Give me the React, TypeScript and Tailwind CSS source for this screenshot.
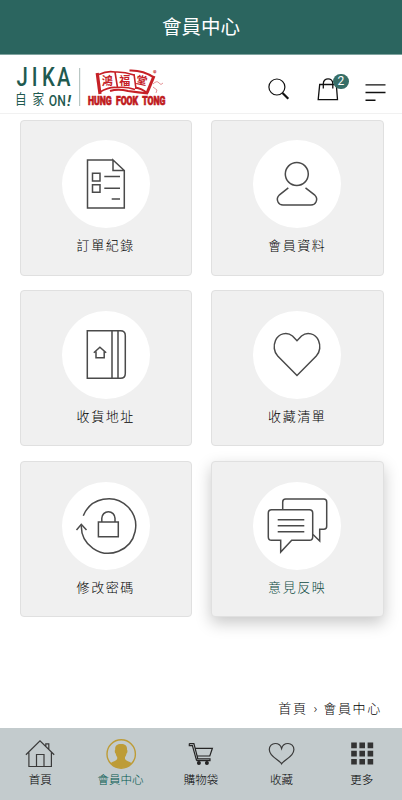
import React from 'react';

interface MenuItem {
  label: string;
  icon: React.ReactNode;
  active?: boolean;
}

const menuItems: MenuItem[] = [
  {
    label: '訂單紀錄',
    icon: (
      <>
        <path d="M51 20H25.5V68H62.3V30.5L51 20V30.5H62.3" />
        <path d="M30.5 33.3H38V41H30.5ZM30.5 44.8H38V52.3H30.5ZM42.3 36.5H58M42.3 48.3H58M49.7 59H58" />
      </>
    ),
  },
  {
    label: '會員資料',
    icon: (
      <>
        <circle cx="43.8" cy="34" r="11.5" />
        <path d="M35.3 47.8L26.5 54.8C24.2 57 24 60 25 62C26 64.2 27.7 65 30 65H58C60.3 65 62 64.2 63 62C64 60 63.8 57 61.5 54.8L52.5 47.8" />
      </>
    ),
  },
  {
    label: '收貨地址',
    icon: (
      <>
        <path d="M25.3 19.7H58.5Q63.3 19.7 63.3 24.5V62.5Q63.3 67.3 58.5 67.3H25.3ZM50 19.7V67.3M56 19.7V67.3" />
        <path d="M31.8 41.8L37.9 36.2L44.2 41.8M34 40.5V46.8H42.2V40.5" />
      </>
    ),
  },
  {
    label: '收藏清單',
    icon: (
      <path d="M44 64.5L24.7 45C20.8 41 20.3 34.5 22.5 29.5C25.5 22.3 34 20.5 39.5 25L44 29.7L48.5 25C54 20.5 62.5 22.3 65.5 29.5C67.7 34.5 67.2 41 63.3 45Z" />
    ),
  },
  {
    label: '修改密碼',
    icon: (
      <>
        <path d="M21.3 33.7A27.2 27.2 0 1 1 19.3 43.3" />
        <path d="M14.5 48L19.3 42.3L24.5 48M36.4 40H56.3V54.7H36.4ZM39.8 40V36.3A6.6 6.6 0 0 1 53 36.3V40" />
      </>
    ),
  },
  {
    label: '意見反映',
    active: true,
    icon: (
      <>
        <path d="M29.7 27.7V20Q29.7 17 32.7 17H70.7Q73.7 17 73.7 20V44.3Q73.7 47.3 70.7 47.3H66.7V59L60 52.5" />
        <path d="M18.6 27.7H56.4Q59.7 27.7 59.7 31V55Q59.7 58.3 56.4 58.3H38.7L27.7 70V58.3H18.6Q15.3 58.3 15.3 55V31Q15.3 27.7 18.6 27.7Z" />
        <path d="M24.7 37.7H51.3M24.7 43.7H51.3M24.7 49.7H51.3" />
      </>
    ),
  },
];

const tabs: MenuItem[] = [
  {
    label: '首頁',
    icon: (
      <g stroke="#3a3a3a" strokeWidth="1.2">
        <path d="M0.9 14.8L15 0.8L29.2 14.8M3.9 12.5V26.5H26.4V12.5M11.5 26.5V14.5H19V26.5M20.8 6V3.8H23.8V9" />
      </g>
    ),
  },
  {
    label: '會員中心',
    active: true,
    icon: (
      <>
        <circle cx="15.2" cy="14" r="14.2" stroke="#bd9c37" strokeWidth="1.4" />
        <path
          fill="#bd9c37"
          d="M15 4C19.5 4 21.3 5.8 21 9.8C21.8 10.5 21.4 13 20.5 13.4C20.2 15.3 19.6 16.3 19 17V19C20 21 23.5 21.3 25.7 23.2C20.5 29.7 9.7 29.7 4.5 23.2C6.7 21.3 10.2 21 11.2 19V17C10.6 16.3 10 15.3 9.7 13.4C8.8 13 8.4 10.5 9.2 9.8C8.9 5.8 10.7 4 15 4Z"
        />
      </>
    ),
  },
  {
    label: '購物袋',
    icon: (
      <g stroke="#252525" strokeWidth="1.4">
        <path d="M3.3 3.6H7.9L12 19.3M3.3 3.6V5.6H6.4L10.6 20.7M8.6 8.3H26.4L23.8 16H10.6M10.8 18.8H24V20.7H10.6" strokeWidth="1.2" />
        <circle cx="12.9" cy="22.9" r="1.3" fill="#252525" />
        <circle cx="20.9" cy="22.9" r="1.3" fill="#252525" />
      </g>
    ),
  },
  {
    label: '收藏',
    icon: (
      <path
        stroke="#3a3a3a"
        strokeWidth="1.2"
        d="M15.6 23.8C14.5 21.6 8.5 18.6 5.3 14.6C3.8 12.7 3.3 11.2 3.3 9.6C3.3 6 6 3.5 9.2 3.5C12.5 3.5 14.8 5.5 15.6 8.5C16.4 5.5 18.7 3.5 22 3.5C25.2 3.5 27.9 6 27.9 9.6C27.9 11.2 27.4 12.7 25.9 14.6C22.7 18.6 16.7 21.6 15.6 23.8Z"
      />
    ),
  },
  {
    label: '更多',
    icon: (
      <path
        fill="#333"
        d="M4.2 2.6h5.6v5.6H4.2zM12.4 2.6H18v5.6h-5.6zM20.6 2.6h5.6v5.6h-5.6zM4.2 10.8h5.6v5.6H4.2zM12.4 10.8H18v5.6h-5.6zM20.6 10.8h5.6v5.6h-5.6zM4.2 19h5.6v5.6H4.2zM12.4 19H18v5.6h-5.6zM20.6 19h5.6v5.6h-5.6z"
      />
    ),
  },
];

const Logo: React.FC = () => (
  <svg width="155" height="52" viewBox="0 0 155 52" fill="none" className="shrink-0 overflow-visible">
    <g fill="#1f5a50" className="font-['Roboto','Noto_Sans_CJK_TC',sans-serif]">
      <text x="2 21.5 34.5 54" y="28.5" fontSize="26" fontWeight="500" transform="scale(0.78 1)">JIKA</text>
      <text x="0 20.4" y="46.5" fontSize="13.5" fontWeight="400" transform="scale(0.86 1)" className="font-['Noto_Sans_CJK_TC',sans-serif]">自家</text>
      <text x="33.8" y="48" fontSize="14.5" fontWeight="500" textLength="17" lengthAdjust="spacingAndGlyphs">ON</text>
      <text x="52" y="48" fontSize="15" fontWeight="700" fontStyle="italic">!</text>
    </g>
    <path d="M64.7 10V48" stroke="#a9bab7" />
    {/* Scroll shaped banner */}
    <g stroke="#c62026" fill="none">
      <path d="M82.2 15L85 36" strokeWidth="3.2" />
      <path d="M84 16.5Q92 12.5 100 14Q109 13.5 119 17M85 34Q94 28.5 102 29.5Q111 28.5 120 31.5M100 14L102.5 29.5M119 16L121 31" strokeWidth="1.6" />
      <path d="M114.5 12.5Q128 12 139 19.5M95 33Q103 30.5 113 33Q124 34.5 133 35.5M120 29.5Q127 30.5 132 35" strokeWidth="2.1" />
      <path d="M139 18L132 35" strokeWidth="3" />
      <path d="M138 26Q142 22 144 25T148 25M138 29L142 32L141 35" strokeWidth="0.8" opacity="0.6" />
    </g>
    <g fill="#c62026" className="font-['Noto_Sans_CJK_TC',sans-serif]">
      <text x="86.8" y="27" fontSize="11" fontWeight="700">鴻</text>
      <text x="104.3" y="26.5" fontSize="11" fontWeight="700">福</text>
      <text x="121" y="26.5" fontSize="11" fontWeight="700" transform="rotate(12 127 23)">堂</text>
      <text x="138" y="18" fontSize="7" fontWeight="700">®</text>
    </g>
    <text
      x="72.9"
      y="47.3"
      fontSize="12"
      fontWeight="900"
      fill="#c01a20"
      stroke="#c01a20"
      strokeWidth="0.7"
      textLength="77.5"
      lengthAdjust="spacingAndGlyphs"
      wordSpacing="3"
      className="font-['Roboto','Liberation_Sans',sans-serif]"
    >
      HUNG FOOK TONG
    </text>
  </svg>
);

const Header: React.FC = () => (
  <header className="flex h-[59px] shrink-0 items-center border-b border-[#f1f1f1] pl-[15px] pr-4">
    <Logo />
    <div className="ml-auto flex h-full items-start">
      <svg width="22" height="22" viewBox="0 0 22 22" fill="none" stroke="#111" className="mt-[23px]">
        <circle cx="8.9" cy="9" r="8" strokeWidth="1.2" />
        <path d="M14.5 15L20.3 20.7" strokeWidth="2.2" />
      </svg>
      <div className="relative ml-[27px] mt-[22px]">
        <svg width="22" height="24" viewBox="0 0 22 24" fill="none" stroke="#111" strokeWidth="1.3">
          <path d="M2.7 7.5H19.3L20.5 22.6H1.2L2.7 7.5ZM6.3 11.5V6.8C6.3 0.2 15.8 0.2 15.8 6.8V11.5" />
        </svg>
        <span className="absolute -right-[9.5px] -top-[3.5px] flex h-[15.5px] w-[15.5px] items-center justify-center rounded-full bg-[#366e67] font-['Roboto',sans-serif] text-xs leading-none font-normal text-white">
          2
        </span>
      </div>
      <svg width="21" height="18" viewBox="0 0 21 18" stroke="#111" strokeWidth="1.4" className="ml-[26px] mt-[29px]">
        <path d="M0.5 0.9H20.5M0.5 8.5H20.5M0.5 16.2H10.5" />
      </svg>
    </div>
  </header>
);

const MenuCard: React.FC<{ item: MenuItem }> = ({ item }) => (
  <div
    className={
      item.active
        ? 'flex h-[156px] flex-col items-center rounded border border-[#e0e0e0] bg-[#f0f0f0] pt-[19.5px] text-[#0d4b43] shadow-[0_6px_16px_rgba(0,0,0,0.22)]'
        : 'flex h-[156px] flex-col items-center rounded border border-[#e0e0e0] bg-[#f0f0f0] pt-[19.5px] text-black'
    }
  >
    <div className="h-[88px] w-[88px] shrink-0 rounded-full bg-white">
      <svg width="88" height="88" viewBox="0 0 88 88" fill="none" stroke="#4a4a4a" strokeWidth="1.5">
        {item.icon}
      </svg>
    </div>
    <span className="mt-[7px] text-[13px] leading-5 tracking-[1.6px]">{item.label}</span>
  </div>
);

export default function App() {
  return (
    <div className="flex h-[800px] w-[402px] flex-col overflow-hidden bg-white font-['Noto_Sans_CJK_TC',sans-serif] font-light">
      <div className="flex h-[55px] shrink-0 items-center justify-center border-b border-[#7fa39f] bg-[#2b655f] pb-0.5 text-[19.5px] font-normal text-white">
        會員中心
      </div>
      <Header />

      <main className="grid grid-cols-2 gap-x-[19px] gap-y-[14.9px] pl-[19.5px] pr-[18.5px] pt-[5.6px]">
        {menuItems.map((item) => (
          <MenuCard key={item.label} item={item} />
        ))}
      </main>

      <div className="mt-auto flex justify-end gap-[6px] pb-[10.5px] pr-5 text-[13px] leading-5 tracking-[1.7px] text-black">
        <span>首頁</span>
        <span className="font-['Noto_Sans',sans-serif] tracking-normal">›</span>
        <span>會員中心</span>
      </div>

      {/* Bottom tab bar */}
      <nav className="grid h-[72px] shrink-0 grid-cols-5 bg-[#c3cbcd] pt-[11px]">
        {tabs.map((tab) => (
          <div key={tab.label} className="flex flex-col items-center">
            <svg width="30" height="30" viewBox="0 -1 30 30" fill="none" className="overflow-visible">
              {tab.icon}
            </svg>
            <span
              className={
                tab.active
                  ? 'text-[11.5px] leading-5 text-[#00584e]'
                  : 'text-[11.5px] leading-5 text-black'
              }
            >
              {tab.label}
            </span>
          </div>
        ))}
      </nav>
    </div>
  );
}
